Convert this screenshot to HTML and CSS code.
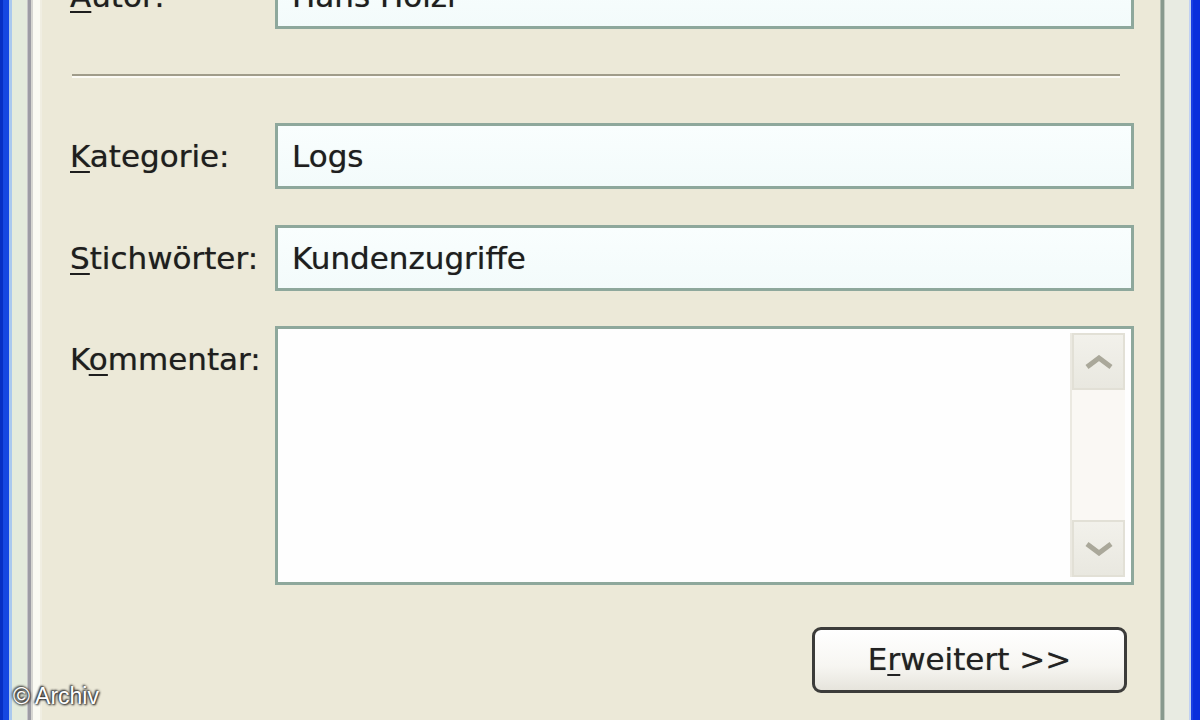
FILE: index.html
```html
<!DOCTYPE html>
<html lang="de">
<head>
<meta charset="utf-8">
<title>Eigenschaften</title>
<link rel="stylesheet" href="styles.css">
</head>
<body>
<div class="screen">
  <div class="edge edge-left"></div>
  <div class="dialog">
    <div class="row row-autor">
      <label class="label"><u>A</u>utor:</label>
      <div class="field">Hans Hölzl</div>
    </div>
    <div class="sep"></div>
    <div class="row row-kat">
      <label class="label"><u>K</u>ategorie:</label>
      <div class="field">Logs</div>
    </div>
    <div class="row row-stich">
      <label class="label"><u>S</u>tichwörter:</label>
      <div class="field">Kundenzugriffe</div>
    </div>
    <div class="row row-comment">
      <label class="label">K<u>o</u>mmentar:</label>
      <div class="field memo">
        <div class="memo-text"></div>
        <div class="scrollbar">
          <div class="sb-btn">
            <svg width="30" height="14" viewBox="0 0 30 14"><polyline points="3,12 15,3 27,12" fill="none" stroke="#aaa89a" stroke-width="5" stroke-linejoin="miter"/></svg>
          </div>
          <div class="sb-track"></div>
          <div class="sb-btn">
            <svg width="30" height="14" viewBox="0 0 30 14"><polyline points="3,2 15,11 27,2" fill="none" stroke="#aaa89a" stroke-width="5" stroke-linejoin="miter"/></svg>
          </div>
        </div>
      </div>
    </div>
    <div class="actions">
      <button class="btn">E<u>r</u>weitert &gt;&gt;</button>
    </div>
  </div>
  <div class="edge edge-right"></div>
  <div class="watermark">© Archiv</div>
</div>
</body>
</html>
```

FILE: styles.css
```css
html, body {
  margin: 0;
  padding: 0;
  background: #ece9d8;
}

.screen {
  position: relative;
  display: flex;
  width: 1200px;
  height: 720px;
  overflow: hidden;
  background: #ece9d8;
  font-family: "DejaVu Sans", Verdana, sans-serif;
  color: #1e1e1e;
}

.edge {
  flex: none;
  height: 100%;
}

.edge-left {
  width: 42px;
  background: linear-gradient(to right,
    #0730c4 0, #0730c4 3px,
    #1548e2 3px, #1548e2 9px,
    #a9c9ee 9px, #a9c9ee 12px,
    #e3ebdc 12px, #e3ebdc 27px,
    #c6c6c8 27px, #c6c6c8 28px,
    #9c9ca4 28px, #9c9ca4 31px,
    #d6d6d2 31px, #d6d6d2 33px,
    #fafaf3 33px, #fafaf3 40px,
    #f0eee2 40px, #f0eee2 42px);
}

.edge-right {
  width: 40px;
  background: linear-gradient(to right,
    #b4beb2 0, #b4beb2 1px,
    #87998d 1px, #87998d 4px,
    #c2cac0 4px, #c2cac0 5px,
    #e8ebe2 5px, #e8ebe2 29px,
    #c0d0f2 29px, #c0d0f2 31px,
    #1a3ee2 31px, #1a3ee2 33px,
    #0a2edc 33px, #0a2edc 40px);
}

.dialog {
  flex: 1;
  display: flex;
  flex-direction: column;
  background: #ece9d8;
}

.row {
  display: grid;
  grid-template-columns: 205px 859px;
  padding-left: 28px;
  height: 66px;
  flex: none;
}

.row-autor {
  margin-top: -37px;
}

.row-kat {
  margin-top: 45px;
}

.row-stich {
  margin-top: 36px;
}

.row-comment {
  margin-top: 35px;
  height: 259px;
}

.label {
  font-size: 31px;
  line-height: 66px;
  white-space: nowrap;
  text-shadow: 0 0 0.7px rgba(30, 30, 30, 0.6);
}

.label u,
.btn u {
  text-decoration-thickness: 2px;
  text-underline-offset: 4px;
}

.field {
  box-sizing: border-box;
  height: 100%;
  border: 3px solid #8ea89c;
  background: linear-gradient(to bottom, #f9fefe, #f3fbfb);
  font-size: 31px;
  line-height: 60px;
  padding-left: 14px;
  white-space: nowrap;
  text-shadow: 0 0 0.7px rgba(30, 30, 30, 0.6);
}

.sep {
  flex: none;
  margin: 45px 40px 0 30px;
  height: 2px;
  background: #a09c8a;
  border-bottom: 2px solid #fbfaf4;
}

.memo {
  display: flex;
  padding-left: 0;
  background: #fefefe;
}

.memo-text {
  flex: 1;
}

.scrollbar {
  width: 53px;
  margin: 4px 6px 5px 0;
  display: flex;
  flex-direction: column;
  background: #f9f7f2;
  border-left: 2px solid #ebe9e1;
}

.sb-btn {
  flex: none;
  height: 57px;
  display: flex;
  align-items: center;
  justify-content: center;
  background: linear-gradient(to bottom, #f2f1eb, #e9e8e0);
  border: 2px solid #e2e0d6;
  box-sizing: border-box;
}

.sb-track {
  flex: 1;
  background: #faf8f4;
}

.actions {
  flex: none;
  display: flex;
  justify-content: flex-end;
  margin-top: 42px;
  padding-right: 33px;
}

.btn {
  width: 315px;
  height: 66px;
  box-sizing: border-box;
  border: 3px solid #3c3c3a;
  border-radius: 9px;
  background: linear-gradient(to bottom, #ffffff 0%, #f7f6f2 60%, #e6e4dc 100%);
  font-family: "DejaVu Sans", Verdana, sans-serif;
  font-size: 31px;
  color: #222222;
  padding: 0;
  padding-bottom: 2px;
  text-shadow: 0 0 0.7px rgba(30, 30, 30, 0.6);
}

.watermark {
  position: absolute;
  left: 13px;
  bottom: 10px;
  font-family: "Liberation Sans", Arial, sans-serif;
  font-size: 23px;
  color: #ffffff;
  text-shadow: 0 0 3px #2a2a2a, 1px 1px 2px #2a2a2a, -1px -1px 2px #2a2a2a;
  white-space: nowrap;
}
```
